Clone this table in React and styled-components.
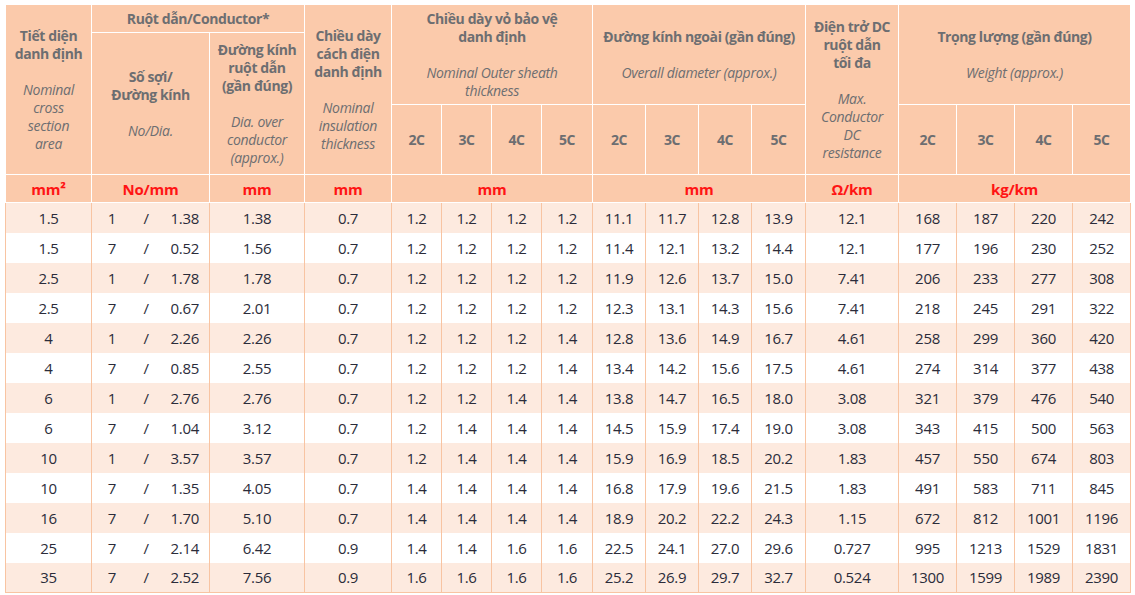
import React from 'react'
import styled, { createGlobalStyle } from 'styled-components'

const GlobalStyle = createGlobalStyle`
	html, body {
		margin: 0;
		padding: 0;
		background: #ffffff;
	}
	body {
		font-family: 'Open Sans', 'Noto Sans', sans-serif;
	}
`

const PEACH = '#fbcaab'
const STRIPE = '#fdeadf'
const LINE = '#f8c4a2'
const GREY = '#6d6e71'
const INK = '#2b2c3a'

const Page = styled.div`
	padding: 4px 0 0 5px;
`

const Table = styled.table`
	border-collapse: collapse;
	table-layout: fixed;
	width: 1126px;
	border-right: 1px solid ${LINE};
	border-bottom: 1px solid ${LINE};
`

const HeadRow = styled.tr`
	height: ${(p) => p.h}px;
`

const HeadCell = styled.th`
	background: ${PEACH};
	border: 1px solid #ffffff;
	color: ${GREY};
	font-size: 14px;
	font-weight: 700;
	line-height: 18px;
	letter-spacing: -0.4px;
	padding: 0;
	text-align: center;
	vertical-align: middle;
`

const Title = styled.div`
	font-weight: 700;
`

const Sub = styled.div`
	font-style: italic;
	font-weight: 400;
	letter-spacing: -0.3px;
	margin-top: 18px;
`

const UnitCell = styled(HeadCell)`
	color: #ff1414;
	font-size: 15px;
	letter-spacing: -0.2px;
`

const BodyRow = styled.tr`
	height: 30px;
	background: ${(p) => (p.odd ? STRIPE : '#ffffff')};
`

const Cell = styled.td`
	border-left: 1px solid ${LINE};
	border-right: 1px solid ${LINE};
	color: ${INK};
	font-size: 15px;
	letter-spacing: -0.3px;
	padding: 0;
	text-align: center;
	vertical-align: middle;
`

const Strand = styled.div`
	display: flex;
	align-items: center;
	padding: 0 10px 0 12px;
`

const StrandNo = styled.span`
	width: 16px;
	text-align: center;
`

const Slash = styled.span`
	width: 8px;
	margin-left: 22px;
	text-align: center;
`

const StrandDia = styled.span`
	margin-left: auto;
`

const widths = [86, 118, 95, 87, 50, 50, 50, 51, 53, 53, 53, 54, 93, 58, 58, 58, 58]

const rows = [
	['1.5', '1', '1.38', '1.38', '0.7', '1.2', '1.2', '1.2', '1.2', '11.1', '11.7', '12.8', '13.9', '12.1', '168', '187', '220', '242'],
	['1.5', '7', '0.52', '1.56', '0.7', '1.2', '1.2', '1.2', '1.2', '11.4', '12.1', '13.2', '14.4', '12.1', '177', '196', '230', '252'],
	['2.5', '1', '1.78', '1.78', '0.7', '1.2', '1.2', '1.2', '1.2', '11.9', '12.6', '13.7', '15.0', '7.41', '206', '233', '277', '308'],
	['2.5', '7', '0.67', '2.01', '0.7', '1.2', '1.2', '1.2', '1.2', '12.3', '13.1', '14.3', '15.6', '7.41', '218', '245', '291', '322'],
	['4', '1', '2.26', '2.26', '0.7', '1.2', '1.2', '1.2', '1.4', '12.8', '13.6', '14.9', '16.7', '4.61', '258', '299', '360', '420'],
	['4', '7', '0.85', '2.55', '0.7', '1.2', '1.2', '1.2', '1.4', '13.4', '14.2', '15.6', '17.5', '4.61', '274', '314', '377', '438'],
	['6', '1', '2.76', '2.76', '0.7', '1.2', '1.2', '1.4', '1.4', '13.8', '14.7', '16.5', '18.0', '3.08', '321', '379', '476', '540'],
	['6', '7', '1.04', '3.12', '0.7', '1.2', '1.4', '1.4', '1.4', '14.5', '15.9', '17.4', '19.0', '3.08', '343', '415', '500', '563'],
	['10', '1', '3.57', '3.57', '0.7', '1.2', '1.4', '1.4', '1.4', '15.9', '16.9', '18.5', '20.2', '1.83', '457', '550', '674', '803'],
	['10', '7', '1.35', '4.05', '0.7', '1.4', '1.4', '1.4', '1.4', '16.8', '17.9', '19.6', '21.5', '1.83', '491', '583', '711', '845'],
	['16', '7', '1.70', '5.10', '0.7', '1.4', '1.4', '1.4', '1.4', '18.9', '20.2', '22.2', '24.3', '1.15', '672', '812', '1001', '1196'],
	['25', '7', '2.14', '6.42', '0.9', '1.4', '1.4', '1.6', '1.6', '22.5', '24.1', '27.0', '29.6', '0.727', '995', '1213', '1529', '1831'],
	['35', '7', '2.52', '7.56', '0.9', '1.6', '1.6', '1.6', '1.6', '25.2', '26.9', '29.7', '32.7', '0.524', '1300', '1599', '1989', '2390'],
]

const cores = ['2C', '3C', '4C', '5C']

const App = () => {
	return (
		<Page>
			<GlobalStyle />
			<Table>
				<colgroup>
					{widths.map((w, i) => (
						<col key={i} style={{ width: w }} />
					))}
				</colgroup>
				<thead>
					<HeadRow h={28}>
						<HeadCell rowSpan={3}>
							<Title>Tiết diện<br />danh định</Title>
							<Sub>Nominal<br />cross<br />section<br />area</Sub>
						</HeadCell>
						<HeadCell colSpan={2}>
							<Title>Ruột dẫn/Conductor*</Title>
						</HeadCell>
						<HeadCell rowSpan={3}>
							<Title>Chiều dày<br />cách điện<br />danh định</Title>
							<Sub>Nominal<br />insulation<br />thickness</Sub>
						</HeadCell>
						<HeadCell colSpan={4} rowSpan={2}>
							<Title>Chiều dày vỏ bảo vệ<br />danh định</Title>
							<Sub>Nominal Outer sheath<br />thickness</Sub>
						</HeadCell>
						<HeadCell colSpan={4} rowSpan={2}>
							<Title>Đường kính ngoài (gần đúng)</Title>
							<Sub>Overall diameter (approx.)</Sub>
						</HeadCell>
						<HeadCell rowSpan={3}>
							<Title>Điện trở DC<br />ruột dẫn<br />tối đa</Title>
							<Sub>Max.<br />Conductor<br />DC<br />resistance</Sub>
						</HeadCell>
						<HeadCell colSpan={4} rowSpan={2}>
							<Title>Trọng lượng (gần đúng)</Title>
							<Sub>Weight (approx.)</Sub>
						</HeadCell>
					</HeadRow>
					<HeadRow h={72}>
						<HeadCell rowSpan={2}>
							<Title>Số sợi/<br />Đường kính</Title>
							<Sub>No/Dia.</Sub>
						</HeadCell>
						<HeadCell rowSpan={2}>
							<Title>Đường kính<br />ruột dẫn<br />(gần đúng)</Title>
							<Sub>Dia. over<br />conductor<br />(approx.)</Sub>
						</HeadCell>
					</HeadRow>
					<HeadRow h={70}>
						{[0, 1, 2].map((g) =>
							cores.map((c) => <HeadCell key={g + c}>{c}</HeadCell>)
						)}
					</HeadRow>
					<HeadRow h={28}>
						<UnitCell>mm²</UnitCell>
						<UnitCell>No/mm</UnitCell>
						<UnitCell>mm</UnitCell>
						<UnitCell>mm</UnitCell>
						<UnitCell colSpan={4}>mm</UnitCell>
						<UnitCell colSpan={4}>mm</UnitCell>
						<UnitCell>Ω/km</UnitCell>
						<UnitCell colSpan={4}>kg/km</UnitCell>
					</HeadRow>
				</thead>
				<tbody>
					{rows.map((r, i) => (
						<BodyRow key={i} odd={i % 2 === 0}>
							<Cell>{r[0]}</Cell>
							<Cell>
								<Strand>
									<StrandNo>{r[1]}</StrandNo>
									<Slash>/</Slash>
									<StrandDia>{r[2]}</StrandDia>
								</Strand>
							</Cell>
							{r.slice(3).map((v, j) => (
								<Cell key={j}>{v}</Cell>
							))}
						</BodyRow>
					))}
				</tbody>
			</Table>
		</Page>
	)
}

export default App
